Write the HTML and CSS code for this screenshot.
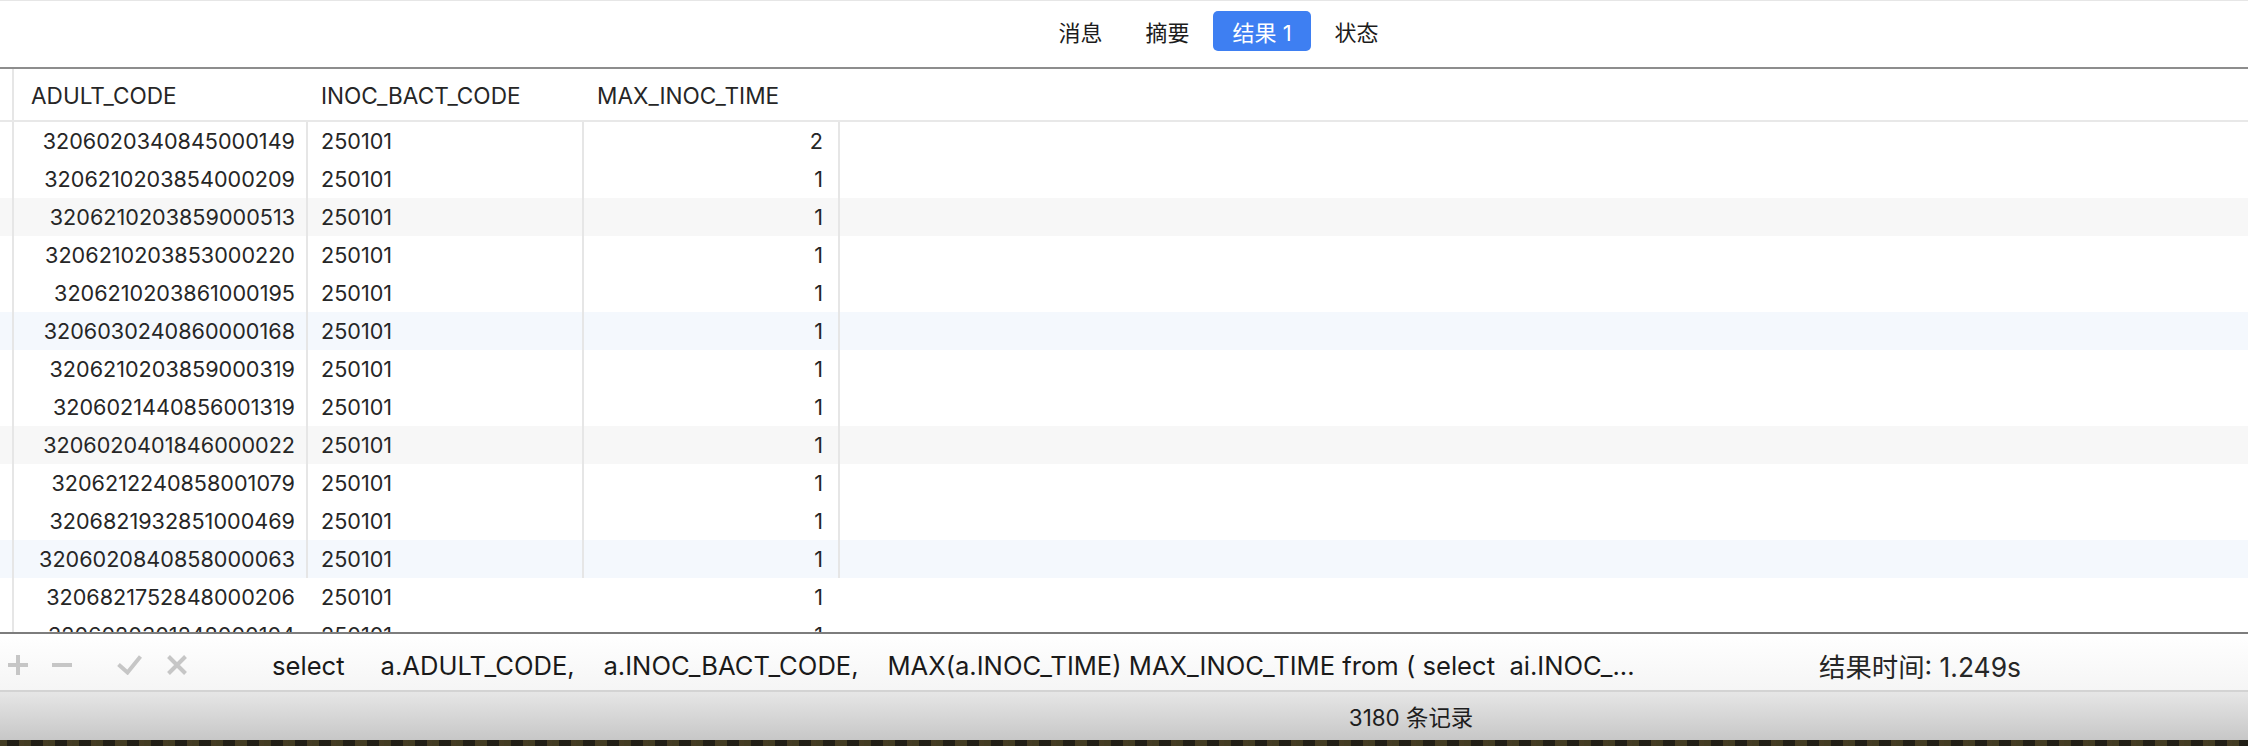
FILE: index.html
```html
<!DOCTYPE html>
<html lang="zh-CN">
<head>
<meta charset="utf-8">
<title>结果 1</title>
<link rel="stylesheet" href="styles.css">
</head>
<body>
<div class="window">
  <header class="tabbar">
    <nav class="tabs">
      <span class="tab">消息</span>
      <span class="tab">摘要</span>
      <span class="tab active">结果 1</span>
      <span class="tab">状态</span>
    </nav>
  </header>

  <section class="grid">
    <div class="row head">
      <div class="gut"></div>
      <div class="c c1">ADULT_CODE</div>
      <div class="c c2">INOC_BACT_CODE</div>
      <div class="c c3">MAX_INOC_TIME</div>
      <div class="fill"></div>
    </div>
    <div class="row"><div class="gut"></div><div class="c c1 num">3206020340845000149</div><div class="c c2">250101</div><div class="c c3 num">2</div><div class="fill"></div></div>
    <div class="row"><div class="gut"></div><div class="c c1 num">3206210203854000209</div><div class="c c2">250101</div><div class="c c3 num">1</div><div class="fill"></div></div>
    <div class="row gray"><div class="gut"></div><div class="c c1 num">3206210203859000513</div><div class="c c2">250101</div><div class="c c3 num">1</div><div class="fill"></div></div>
    <div class="row"><div class="gut"></div><div class="c c1 num">3206210203853000220</div><div class="c c2">250101</div><div class="c c3 num">1</div><div class="fill"></div></div>
    <div class="row"><div class="gut"></div><div class="c c1 num">3206210203861000195</div><div class="c c2">250101</div><div class="c c3 num">1</div><div class="fill"></div></div>
    <div class="row blue"><div class="gut"></div><div class="c c1 num">3206030240860000168</div><div class="c c2">250101</div><div class="c c3 num">1</div><div class="fill"></div></div>
    <div class="row"><div class="gut"></div><div class="c c1 num">3206210203859000319</div><div class="c c2">250101</div><div class="c c3 num">1</div><div class="fill"></div></div>
    <div class="row"><div class="gut"></div><div class="c c1 num">3206021440856001319</div><div class="c c2">250101</div><div class="c c3 num">1</div><div class="fill"></div></div>
    <div class="row gray"><div class="gut"></div><div class="c c1 num">3206020401846000022</div><div class="c c2">250101</div><div class="c c3 num">1</div><div class="fill"></div></div>
    <div class="row"><div class="gut"></div><div class="c c1 num">3206212240858001079</div><div class="c c2">250101</div><div class="c c3 num">1</div><div class="fill"></div></div>
    <div class="row"><div class="gut"></div><div class="c c1 num">3206821932851000469</div><div class="c c2">250101</div><div class="c c3 num">1</div><div class="fill"></div></div>
    <div class="row blue"><div class="gut"></div><div class="c c1 num">3206020840858000063</div><div class="c c2">250101</div><div class="c c3 num">1</div><div class="fill"></div></div>
    <div class="row open"><div class="gut"></div><div class="c c1 num">3206821752848000206</div><div class="c c2">250101</div><div class="c c3 num">1</div><div class="fill"></div></div>
    <div class="row open"><div class="gut"></div><div class="c c1 num">3206020301248000104</div><div class="c c2">250101</div><div class="c c3 num">1</div><div class="fill"></div></div>
  </section>

  <div class="toolbar">
    <svg class="ic ic-plus" width="20" height="20" viewBox="0 0 20 20"><path d="M10 0v20M0 10h20" stroke="#c6c6c6" stroke-width="4" fill="none"/></svg>
    <svg class="ic ic-minus" width="20" height="20" viewBox="0 0 20 20"><path d="M0 10h20" stroke="#c6c6c6" stroke-width="4" fill="none"/></svg>
    <svg class="ic ic-check" width="25" height="20" viewBox="0 0 25 20"><path d="M1.5 9.5l9 8L23.5 1.5" stroke="#c6c6c6" stroke-width="4" fill="none"/></svg>
    <svg class="ic ic-x" width="20" height="20" viewBox="0 0 20 20"><path d="M1.5 1.5l17 17M18.5 1.5l-17 17" stroke="#c6c6c6" stroke-width="4" fill="none"/></svg>
    <div class="sql">select     a.ADULT_CODE,    a.INOC_BACT_CODE,    MAX(a.INOC_TIME) MAX_INOC_TIME from ( select  ai.INOC_...</div>
    <div class="elapsed">结果时间: 1.249s</div>
  </div>

  <footer class="status">3180 条记录</footer>
  <div class="desktop"></div>
</div>
</body>
</html>
```

FILE: styles.css
```css
html, body {
  margin: 0;
  padding: 0;
}

body {
  width: 2248px;
  height: 746px;
  overflow: hidden;
  background: #ffffff;
  font-family: Inter, "Noto Sans CJK SC", sans-serif;
  color: #262626;
}

.window {
  display: flex;
  flex-direction: column;
  height: 746px;
}

/* ---------- tab bar ---------- */
.tabbar {
  flex: 0 0 auto;
  height: 56px;
  padding-top: 10px;
  padding-left: 189px;
  border-top: 1px solid #e6e6e6;
  border-bottom: 2px solid #8d8d8d;
  display: flex;
  justify-content: center;
  align-items: flex-start;
}

.tabs {
  display: flex;
  gap: 5px;
}

.tab {
  height: 40px;
  padding: 0 19px;
  display: flex;
  align-items: center;
  font-size: 22px;
  color: #1c1c1c;
  border-radius: 5px;
}

.tab.active {
  background: #3e7ff2;
  color: #ffffff;
}

/* ---------- result grid ---------- */
.grid {
  flex: 1 1 auto;
  overflow: hidden;
}

.row {
  display: grid;
  grid-template-columns: 14px 294px 276px 256px 1fr;
  height: 38px;
  font-size: 21.6px;
}

.row.gray { background: #f7f7f7; }
.row.blue { background: #f4f8fd; }

.gut,
.c {
  box-sizing: border-box;
  border-right: 2px solid #e6e6e6;
}

.c {
  display: flex;
  align-items: center;
  white-space: nowrap;
  overflow: hidden;
}

.c1 { padding: 0 11px 0 17px; }
.c2 { padding: 0 12px 0 13px; }
.c3 { padding: 0 15px 0 13px; }

.num { justify-content: flex-end; }

.row.open .c { border-right-color: transparent; }

.row.head {
  height: 51px;
  border-bottom: 2px solid #e8e8e8;
  background: #ffffff;
  font-size: 22.6px;
}

.row.head .c {
  position: relative;
  border-right-color: transparent;
  padding-top: 2px;
  color: #262626;
}

.row.head .c::after {
  content: "";
  position: absolute;
  right: -2px;
  top: 10px;
  bottom: 9px;
  width: 2px;
  background: #e6e6e6;
}

/* ---------- query toolbar ---------- */
.toolbar {
  flex: 0 0 auto;
  height: 50px;
  padding-top: 6px;
  border-top: 2px solid #7d7d7d;
  border-bottom: 2px solid #d3d3d3;
  background: linear-gradient(#ffffff, #f5f5f5);
  display: flex;
  align-items: center;
  padding-left: 8px;
}

.ic { flex: 0 0 auto; display: block; }
.ic-minus { margin-left: 24px; }
.ic-check { margin-left: 45px; }
.ic-x { margin-left: 25px; }

.sql {
  flex: 0 0 1547px;
  margin-left: 85px;
  white-space: pre;
  overflow: hidden;
  font-size: 25.6px;
  color: #1a1a1a;
}

.elapsed {
  flex: 0 0 auto;
  font-size: 26.4px;
  color: #262626;
}

/* ---------- status bar ---------- */
.status {
  flex: 0 0 auto;
  height: 48px;
  padding-left: 574px;
  background: linear-gradient(#e6e6e6, #c7c7c7);
  display: flex;
  justify-content: center;
  align-items: center;
  font-size: 22.4px;
  color: #1e1e1e;
}

.desktop {
  flex: 0 0 6px;
  background:
    repeating-linear-gradient(90deg, rgba(90, 80, 40, 0.5) 0 7px, rgba(20, 18, 12, 0.4) 7px 19px, rgba(120, 100, 50, 0.35) 19px 24px),
    #2a271c;
}
```
